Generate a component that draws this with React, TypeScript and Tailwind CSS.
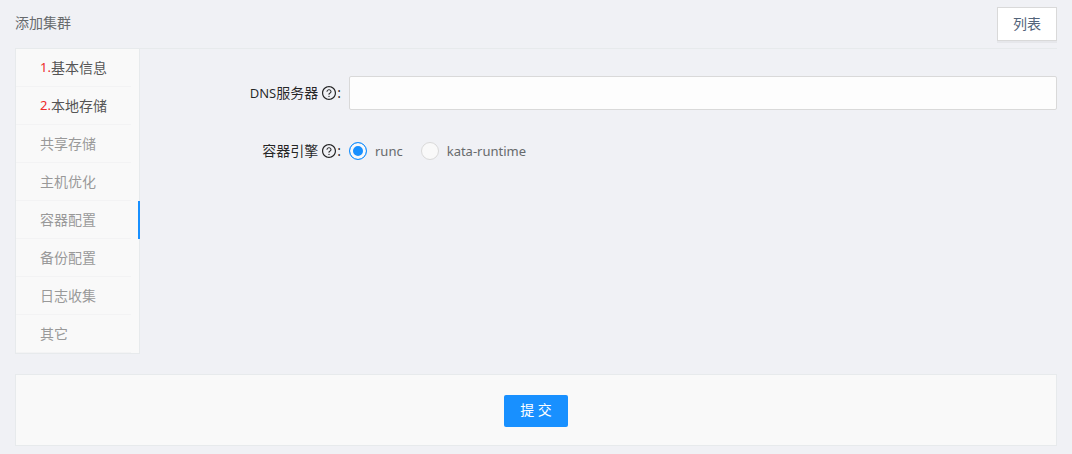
import React from "react";
import clsx from "clsx";
import { AiOutlineQuestionCircle } from "react-icons/ai";

const steps = [
  { name: "基本信息", no: 1 },
  { name: "本地存储", no: 2 },
  { name: "共享存储" },
  { name: "主机优化" },
  { name: "容器配置" },
  { name: "备份配置" },
  { name: "日志收集" },
  { name: "其它" },
];

const runtimes = ["runc", "kata-runtime"];

const FieldLabel = ({ prefix, text }: { prefix?: string; text: string }) => (
  <span className="flex items-center text-black/85">
    {prefix && <span className="text-[13px]">{prefix}</span>}
    {text}
    <AiOutlineQuestionCircle className="ml-[3px] size-4" />
    <span>:</span>
  </span>
);

const App = () => {
  const [active, setActive] = React.useState(4);
  const [dns, setDns] = React.useState("");
  const [runtime, setRuntime] = React.useState("runc");

  return (
    <div className="min-h-screen bg-[#f0f1f5] px-[15px] pb-2 font-['Noto_Sans','Noto_Sans_CJK_SC',sans-serif] text-sm text-[#676a6c]">
      <header className="flex h-12 items-center justify-between">
        <h1 className="pb-0.5">添加集群</h1>
        <button
          type="button"
          className="h-[34px] border border-[#d9d9d9] bg-white px-[15px] text-[#53647a] shadow-[0_2px_0_rgba(0,0,0,0.04)]"
        >
          列表
        </button>
      </header>

      <main className="flex items-start border-t border-[#e7eaec]">
        <nav className="w-[125px] shrink-0 border-x border-b border-[#e7eaec] bg-[#f9f9f9]">
          {steps.map((step, index) => (
            <button
              key={step.name}
              type="button"
              onClick={() => setActive(index)}
              className={clsx(
                "relative block h-[38px] w-full pr-2 text-left",
                step.no ? "text-[#555555]" : "text-[#999999]",
                active === index &&
                  "after:absolute after:inset-y-0 after:-right-px after:w-0.5 after:bg-[#1890ff]",
              )}
            >
              <span className="flex h-full items-center border-b border-[#f3f3f4] pl-6">
                {step.no && <span className="text-[13px] text-[#ed2b2b]">{step.no}.</span>}
                {step.name}
              </span>
            </button>
          ))}
        </nav>

        <form className="min-w-0 flex-1 pt-[27px]">
          <div className="flex items-center">
            <label htmlFor="dns" className="flex w-[209px] shrink-0 justify-end pr-2">
              <FieldLabel prefix="DNS" text="服务器" />
            </label>
            <input
              id="dns"
              type="text"
              value={dns}
              onChange={(e) => setDns(e.target.value)}
              className="h-[34px] min-w-0 flex-1 rounded-xs border border-[#d9d9d9] bg-[#fdfdfd] px-3 outline-none focus:border-[#1890ff]"
            />
          </div>

          <div role="radiogroup" aria-labelledby="runtime-label" className="mt-6 flex h-[34px] items-center">
            <div id="runtime-label" className="flex w-[209px] shrink-0 justify-end pr-2">
              <FieldLabel text="容器引擎" />
            </div>
            <div className="flex gap-[18px] text-[13px]">
              {runtimes.map((name) => (
                <label key={name} className="flex items-center gap-2">
                  <input
                    type="radio"
                    name="runtime"
                    value={name}
                    checked={runtime === name}
                    onChange={() => setRuntime(name)}
                    className="size-[18px] appearance-none rounded-full border border-[#d9d9d9] bg-[#f9f9f9] checked:border-[#1890ff] checked:bg-[#1890ff] checked:shadow-[inset_0_0_0_3px_#f9f9f9]"
                  />
                  {name}
                </label>
              ))}
            </div>
          </div>
        </form>
      </main>

      <footer className="mt-5 flex justify-center border border-[#e7eaec] bg-[#f9f9f9] pt-5 pb-[18px]">
        <button type="button" className="h-8 rounded-xs bg-[#1890ff] px-4 pb-0.5 text-white">
          提 交
        </button>
      </footer>
    </div>
  );
};

export default App;
